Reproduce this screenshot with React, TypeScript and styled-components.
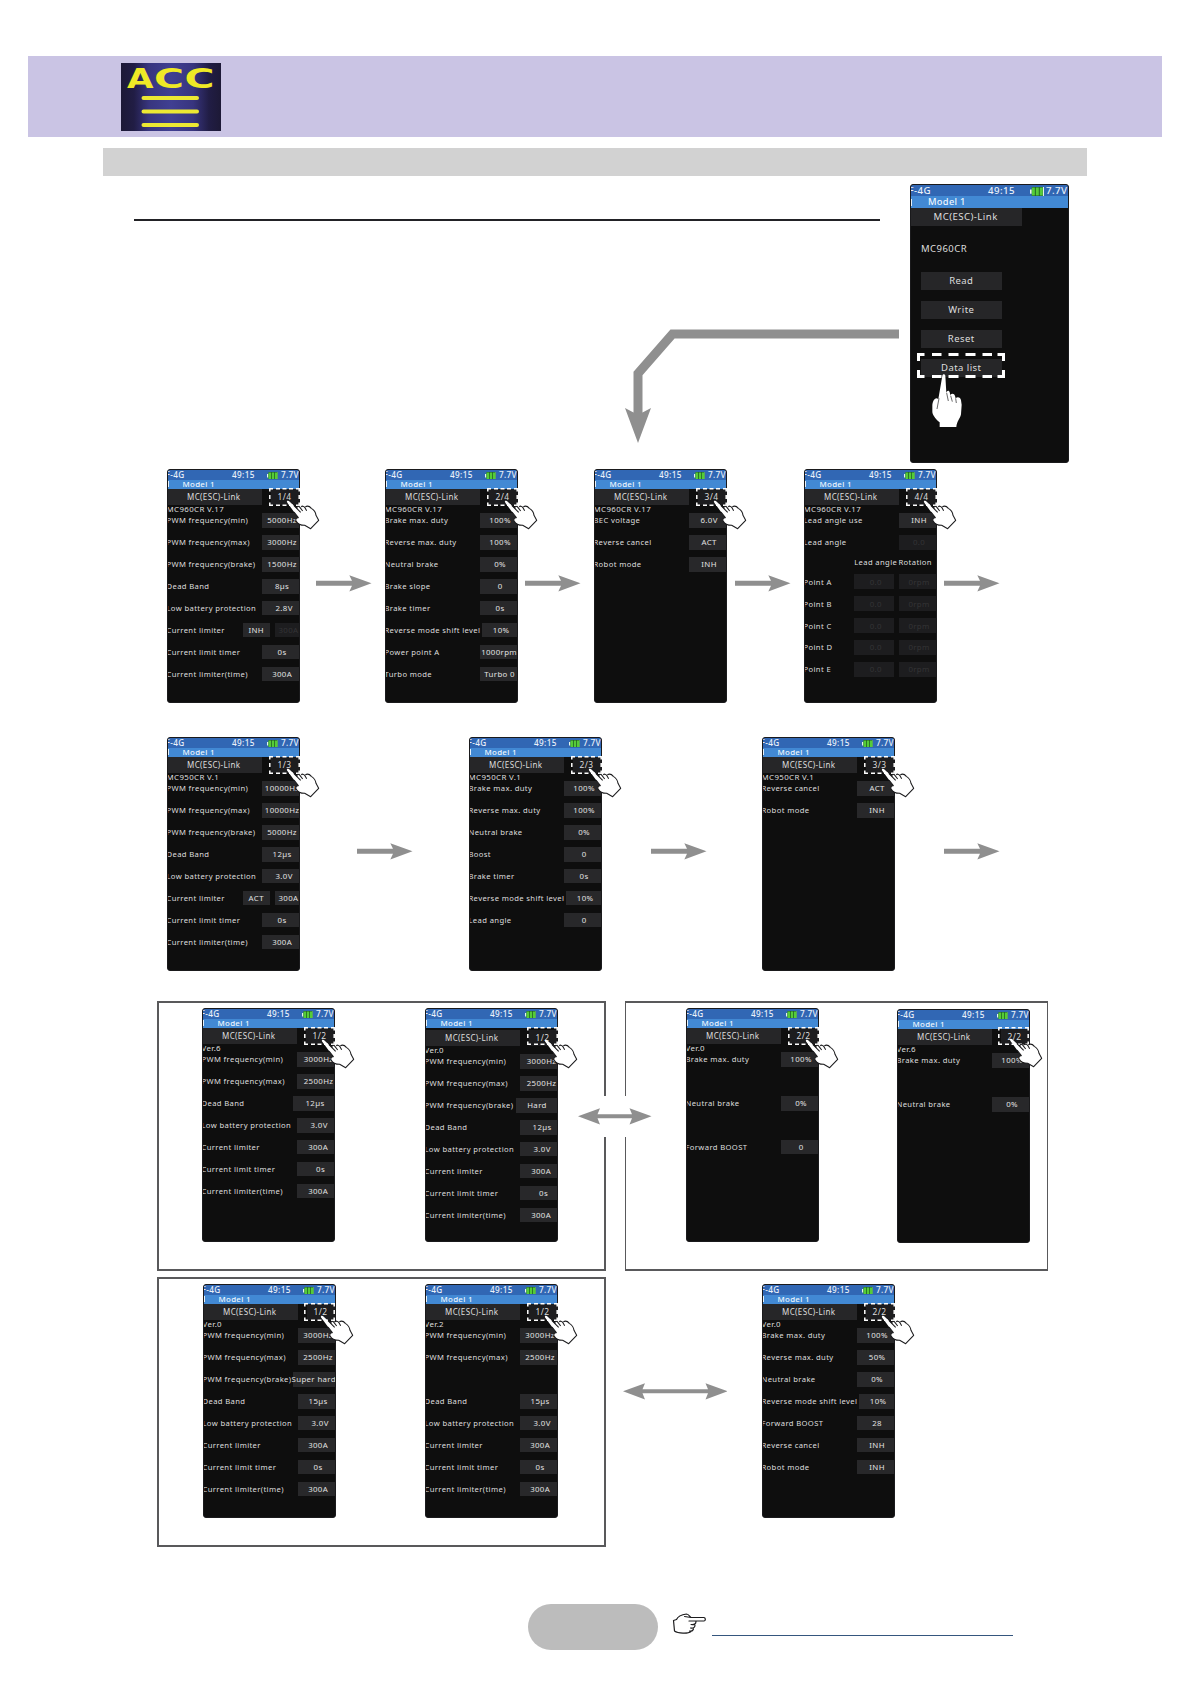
import { createGlobalStyle, styled } from "styled-components";

const GlobalStyle = createGlobalStyle`
    * {
        box-sizing: border-box;
    }
    body {
        margin: 0;
        background-color: white;
        font-family: "Noto Sans", "Open Sans", sans-serif;
    }
    svg {
        display: block;
        flex-shrink: 0;
    }
`;

const Page = styled.div`
    display: flex;
    flex-direction: column;
    width: 1190px;
    height: 1684px;
    padding-top: 56px;
    overflow: hidden;
    background-color: white;
`;

const Banner = styled.header`
    display: flex;
    align-items: flex-start;
    width: 1134px;
    height: 81px;
    margin-left: 28px;
    padding: 7px 0 0 93px;
    background-color: #cac4e4;
`;

const SubBar = styled.div`
    width: 984px;
    height: 28px;
    margin: 11px 0 0 103px;
    background-color: #d2d2d2;
`;

const Intro = styled.section`
    display: flex;
    height: 293px;
    padding-left: 134px;
`;

const IntroText = styled.div`
    display: flex;
    flex-direction: column;
    align-items: flex-end;
    width: 765px;
    padding-top: 43px;
`;

const Rule = styled.div`
    align-self: flex-start;
    width: 746px;
    height: 2px;
    margin-bottom: 108px;
    background-color: #222226;
`;

const FlowRow = styled.section<{ $top?: number; $height?: number }>`
    position: relative;
    display: flex;
    align-items: flex-start;
    height: ${(p) => p.$height ?? 234}px;
    margin-top: ${(p) => p.$top ?? 0}px;
`;

const Group = styled.div<{ $gap: number; $width: number; $side?: number }>`
    display: flex;
    align-items: flex-start;
    flex-shrink: 0;
    width: ${(p) => p.$width}px;
    height: 100%;
    margin-left: ${(p) => p.$gap}px;
    border: 2px solid #59595b;
    border-left-width: ${(p) => p.$side ?? 2}px;
    border-right-width: ${(p) => p.$side ?? 2}px;
`;

const ArrowSlot = styled.div<{ $gap: number; $top?: number }>`
    flex-shrink: 0;
    margin-left: ${(p) => p.$gap}px;
    margin-top: ${(p) => p.$top ?? 106}px;
`;

// sits over the two group frames and opens a gap in them
const Bridge = styled.div`
    position: absolute;
    left: 578px;
    top: 95px;
    display: flex;
    align-items: center;
    height: 41px;
    background-color: white;
`;

const Device = styled.div<{ $gap: number; $top?: number }>`
    position: relative;
    flex-shrink: 0;
    width: 133px;
    height: 234px;
    margin-left: ${(p) => p.$gap}px;
    margin-top: ${(p) => p.$top ?? 0}px;
`;

const Screen = styled.div`
    width: 100%;
    height: 100%;
    overflow: hidden;
    border: 1px solid #1a1a1c;
    border-radius: 3px;
    background-color: #0e0e0e;
    color: #dedede;
    font-size: 7.65px;
    letter-spacing: 0.37px;
    line-height: 10px;
    white-space: nowrap;
`;

const StatusBar = styled.div`
    display: flex;
    align-items: center;
    height: 9.5px;
    padding-top: 1px;
    background-color: #3167b4;
    color: #eaf1f9;
    font-size: 8.2px;
    font-weight: 500;
`;

const Signal = styled.span`
    width: 67.5px;
    margin-left: -2.5px;
`;

const Clock = styled.span`
    width: 35.5px;
`;

const Voltage = styled.span`
    margin-left: 2.5px;
`;

const ModelBar = styled.div`
    display: flex;
    align-items: center;
    height: 9.5px;
    background-color: #4289d4;
    color: #eef6fd;
    font-size: 7.9px;
    font-weight: 500;
    letter-spacing: 0.3px;

    &::before {
        content: "";
        width: 1px;
        height: 6px;
        margin-right: 13.5px;
        background-color: #e6f1fb;
    }
`;

const TabRow = styled.div<{ $drop?: number }>`
    display: flex;
    justify-content: space-between;
    height: 16px;
    margin-top: ${(p) => p.$drop ?? 0}px;
`;

const Tab = styled.div`
    display: flex;
    align-items: center;
    width: 94px;
    padding-left: 19px;
    background-color: #262628;
    font-size: 8px;
`;

const PageNo = styled.div`
    display: flex;
    align-items: center;
    justify-content: center;
    width: 28px;
    padding-right: 1px;
    background-color: #1d1d1f;
    font-size: 8.4px;
`;

const Version = styled.div`
    height: 9px;
    margin-left: -1.5px;
    font-size: 7.9px;
    line-height: 8px;
`;

// the first row is pulled up under the version text
const Lines = styled.div`
    margin-top: -4.5px;
`;

const Line = styled.div<{ $height?: number }>`
    display: flex;
    align-items: center;
    height: ${(p) => p.$height ?? 21.95}px;
`;

const Label = styled.span`
    flex: 1;
    min-width: 0;
    margin-left: -1.5px;
`;

const Value = styled.span<{ $width?: number; $shift?: number; $off?: boolean }>`
    display: flex;
    flex-shrink: 0;
    align-items: center;
    justify-content: center;
    width: ${(p) => p.$width ?? 37.3}px;
    height: 14.5px;
    padding-left: ${(p) => Math.max(0, 3.5 + (p.$shift ?? 0) * 2)}px;
    background-color: ${(p) => (p.$off ? "#1d1d1f" : "#28282a")};
    color: ${(p) => (p.$off ? "#343436" : "#e2e2e2")};
    font-size: 7.85px;
`;

const Spacer = styled.span<{ $width: number }>`
    flex-shrink: 0;
    width: ${(p) => p.$width}px;
`;

const Mark = styled.div<{ $x?: number; $y?: number }>`
    position: absolute;
    left: ${(p) => 102.3 + (p.$x ?? 0)}px;
    top: ${(p) => 19 + (p.$y ?? 0)}px;
`;

const Pointer = styled.div<{ $x?: number; $y?: number }>`
    position: absolute;
    left: ${(p) => 118.7 + (p.$x ?? 0)}px;
    top: ${(p) => 30.5 + (p.$y ?? 0)}px;
`;

const MenuDevice = styled.div`
    position: relative;
    flex-shrink: 0;
    width: 158.5px;
    height: 279px;
    margin: 8px 0 0 11px;
`;

const MenuScreen = styled(Screen)`
    font-size: 9.5px;
    letter-spacing: 0.45px;

    ${StatusBar} {
        height: 11.3px;
        font-size: 9.7px;
    }
    ${ModelBar} {
        height: 11.5px;
        font-size: 9.3px;
    }
    ${ModelBar}::before {
        height: 7px;
        margin-right: 16px;
    }
    ${Signal} {
        width: 79.5px;
    }
    ${Clock} {
        width: 41.5px;
    }
    ${Tab} {
        width: 110.5px;
        padding-left: 22.5px;
        font-size: 9.6px;
    }
    ${TabRow} {
        height: 18px;
    }
`;

const MenuTitle = styled.div`
    margin: 17px 0 18.5px 10px;
    line-height: 11px;
`;

const MenuButtons = styled.div`
    display: flex;
    flex-direction: column;
    gap: 11.5px;
    padding-left: 10px;
`;

const MenuButton = styled.div`
    display: flex;
    align-items: center;
    justify-content: center;
    width: 80.5px;
    height: 17.5px;
    background-color: #262628;
`;

const MenuMark = styled.div`
    position: absolute;
    left: 7px;
    top: 169px;
`;

const MenuPointer = styled.div`
    position: absolute;
    left: 21px;
    top: 189px;
`;

const Footer = styled.footer`
    display: flex;
    height: 46px;
    margin: 57px 0 0 527.5px;
`;

const Pill = styled.div`
    width: 130px;
    height: 46px;
    border-radius: 23px;
    background-color: #bcbcbc;
`;

const FooterHand = styled.div`
    margin: 8.5px 0 0 14px;
`;

const FooterLink = styled.div`
    width: 301px;
    height: 32px;
    margin-left: 6.5px;
    border-bottom: 1px solid #35567e;
`;

type Item = {
    label?: string;
    value?: string;
    width?: number;
    shift?: number;
    off?: boolean;
    toggle?: string;
};

type Info = {
    page: string;
    version: string;
    items: Item[];
    drop?: number;
    markX?: number;
    markY?: number;
    handX?: number;
    handY?: number;
};

const min = (value: string): Item => ({ label: "PWM frequency(min)", value });
const max = (value: string): Item => ({ label: "PWM frequency(max)", value });
const limits = (shift = 0): Item[] => [
    { label: "Current limit timer", value: "0s", shift },
    { label: "Current limiter(time)", value: "300A" },
];
const low = (value: string): Item => ({ label: "Low battery protection", value, shift: 2 });

const mc960: Info[] = [
    {
        page: "1/4",
        version: "MC960CR V.17",
        items: [
            min("5000Hz"),
            max("3000Hz"),
            { label: "PWM frequency(brake)", value: "1500Hz" },
            { label: "Dead Band", value: "8µs" },
            low("2.8V"),
            { label: "Current limiter", value: "300A", toggle: "INH", off: true },
            ...limits(),
        ],
    },
    {
        page: "2/4",
        version: "MC960CR V.17",
        items: [
            { label: "Brake max. duty", value: "100%" },
            { label: "Reverse max. duty", value: "100%" },
            { label: "Neutral brake", value: "0%" },
            { label: "Brake slope", value: "0" },
            { label: "Brake timer", value: "0s" },
            { label: "Reverse mode shift level", value: "10%", width: 35.3 },
            { label: "Power point A", value: "1000rpm", shift: -1 },
            { label: "Turbo mode", value: "Turbo 0", shift: -0.5 },
        ],
    },
    {
        page: "3/4",
        version: "MC960CR V.17",
        items: [
            { label: "BEC voltage", value: "6.0V" },
            { label: "Reverse cancel", value: "ACT" },
            { label: "Robot mode", value: "INH" },
        ],
    },
    {
        page: "4/4",
        version: "MC960CR V.17",
        items: [
            { label: "Lead angle use", value: "INH" },
            { label: "Lead angle", value: "0.0", off: true },
        ],
    },
];

const mc950: Info[] = [
    {
        page: "1/3",
        version: "MC950CR V.1",
        items: [
            min("10000Hz"),
            max("10000Hz"),
            { label: "PWM frequency(brake)", value: "5000Hz" },
            { label: "Dead Band", value: "12µs" },
            low("3.0V"),
            { label: "Current limiter", value: "300A", toggle: "ACT" },
            ...limits(),
        ],
    },
    {
        page: "2/3",
        version: "MC950CR V.1",
        items: [
            { label: "Brake max. duty", value: "100%" },
            { label: "Reverse max. duty", value: "100%" },
            { label: "Neutral brake", value: "0%" },
            { label: "Boost", value: "0" },
            { label: "Brake timer", value: "0s" },
            { label: "Reverse mode shift level", value: "10%", width: 35.3 },
            { label: "Lead angle", value: "0" },
        ],
    },
    {
        page: "3/3",
        version: "MC950CR V.1",
        items: [
            { label: "Reverse cancel", value: "ACT" },
            { label: "Robot mode", value: "INH" },
        ],
    },
];

const first: Info[] = [
    {
        page: "1/2",
        version: "Ver.6",
        items: [
            { ...min("3000Hz"), shift: 1.5 },
            { ...max("2500Hz"), shift: 1.5 },
            { label: "Dead Band", value: "12µs", width: 41.5 },
            low("3.0V"),
            { label: "Current limiter", value: "300A", shift: 1 },
            { label: "Current limit timer", value: "0s", shift: 3.5 },
            { label: "Current limiter(time)", value: "300A", shift: 1 },
        ],
    },
    {
        page: "1/2",
        version: "Ver.0",
        drop: 2,
        items: [
            { ...min("3000Hz"), shift: 1.5 },
            { ...max("2500Hz"), shift: 1.5 },
            { label: "PWM frequency(brake)", value: "Hard", width: 41.5, shift: -1 },
            { label: "Dead Band", value: "12µs", shift: 2 },
            low("3.0V"),
            { label: "Current limiter", value: "300A", shift: 1 },
            { label: "Current limit timer", value: "0s", shift: 3.5 },
            { label: "Current limiter(time)", value: "300A", shift: 1 },
        ],
    },
    {
        page: "2/2",
        version: "Ver.0",
        items: [
            { label: "Brake max. duty", value: "100%" },
            {},
            { label: "Neutral brake", value: "0%" },
            {},
            { label: "Forward BOOST", value: "0" },
        ],
    },
    {
        page: "2/2",
        version: "Ver.6",
        markX: -1.5,
        markY: -1,
        handX: -7,
        handY: -1.5,
        items: [{ label: "Brake max. duty", value: "100%" }, {}, { label: "Neutral brake", value: "0%" }],
    },
];

const second: Info[] = [
    {
        page: "1/2",
        version: "Ver.0",
        markX: -1.5,
        handX: -1.5,
        items: [
            min("3000Hz"),
            max("2500Hz"),
            { label: "PWM frequency(brake)", value: "Super hard", width: 42.5, shift: -2 },
            { label: "Dead Band", value: "15µs" },
            low("3.0V"),
            { label: "Current limiter", value: "300A" },
            ...limits(),
        ],
    },
    {
        page: "1/2",
        version: "Ver.2",
        items: [
            min("3000Hz"),
            max("2500Hz"),
            {},
            { label: "Dead Band", value: "15µs" },
            low("3.0V"),
            { label: "Current limiter", value: "300A" },
            ...limits(),
        ],
    },
    {
        page: "2/2",
        version: "Ver.0",
        items: [
            { label: "Brake max. duty", value: "100%" },
            { label: "Reverse max. duty", value: "50%" },
            { label: "Neutral brake", value: "0%" },
            { label: "Reverse mode shift level", value: "10%", width: 35.3 },
            { label: "Forward BOOST", value: "28" },
            { label: "Reverse cancel", value: "INH" },
            { label: "Robot mode", value: "INH" },
        ],
    },
];

function Battery({ width = 11.5 }: { width?: number }) {
    return (
        <svg width={width} height={width * 0.65} viewBox="0 0 23 15">
            <path d="M0 4h3v7H0zM21 0h2v15h-2z" fill="#e8f5e8" />
            <path d="M3 0h18v15H3z" fill="#1f5a24" />
            <path d="M3 1h5v13H3zM9.500 1h5v13h-5zM16 1h5v13h-5z" fill="#55cc38" />
        </svg>
    );
}

function StatusHead({ big }: { big?: boolean }) {
    return (
        <>
            <StatusBar>
                <Signal>F-4G</Signal>
                <Clock>49:15</Clock>
                <Battery width={big ? 14 : 11.5} />
                <Voltage>7.7V</Voltage>
            </StatusBar>
            <ModelBar>Model 1</ModelBar>
        </>
    );
}

function HandPointer() {
    return (
        <svg width="35" height="31" viewBox="0 0 105 93">
            <path
                d="M3 3C6 1 9 3 12 6L34 27C31 20 34 17 40 19L46 21C48 17 53 17 58 20C62 17 69 19 74 23C82 28 88 34 90 44L98 61L74 86L56 76C44 76 34 70 30 62C28 56 33 52 37 53L5 10C3 7 2 5 3 3Z"
                fill="white"
            />
            <path
                d="M24 17L44 37M34 27C31 20 34 17 40 20L50 33M46 21C48 17 53 18 56 22L62 32M58 20C64 17 72 20 76 25C86 31 89 38 90 46L98 61L74 86L56 76C44 76 34 70 30 62C28 56 33 52 37 53L24 36"
                fill="none"
                stroke="#1c1c1e"
                strokeWidth="3.2"
                strokeLinejoin="round"
            />
        </svg>
    );
}

function Arrow() {
    return (
        <svg width="56" height="17" viewBox="0 0 56 17">
            <path d="M0 5.7H36L33.3 0.3L55.5 8.2L33.3 16.6L36 10.7H0Z" fill="#8f8f8f" />
        </svg>
    );
}

function DoubleArrow({ width }: { width: number }) {
    const end = width - 22;
    return (
        <svg width={width} height="17" viewBox={`0 0 ${width} 17`}>
            <path
                d={`M0 8.2L22 0.2L19.5 6.2H${end + 2.5}L${end} 0.2L${width} 8.2L${end} 16.4L${end + 2.5} 10.2H19.5L22 16.4Z`}
                fill="#8f8f8f"
            />
        </svg>
    );
}

function PointTable() {
    return (
        <>
            <Line $height={17.3}>
                <Spacer $width={49.2} />
                <Spacer $width={44.3}>Lead angle</Spacer>
                <span>Rotation</span>
            </Line>
            {["A", "B", "C", "D", "E"].map((name) => (
                <Line key={name}>
                    <Label>Point {name}</Label>
                    <Value $off $width={39.7}>0.0</Value>
                    <Spacer $width={4.8} />
                    <Value $off>0rpm</Value>
                </Line>
            ))}
        </>
    );
}

function Phone({ info, gap, top, table }: { info: Info; gap: number; top?: number; table?: boolean }) {
    return (
        <Device $gap={gap} $top={top}>
            <Screen>
                <StatusHead />
                <TabRow $drop={info.drop}>
                    <Tab>MC(ESC)-Link</Tab>
                    <PageNo>{info.page}</PageNo>
                </TabRow>
                <Version>{info.version}</Version>
                <Lines>
                    {info.items.map((item, i) => (
                        <Line key={i}>
                            <Label>{item.label}</Label>
                            {item.toggle && (
                                <>
                                    <Value $width={27} $shift={-1.5}>{item.toggle}</Value>
                                    <Spacer $width={5} />
                                </>
                            )}
                            {item.value && (
                                <Value $width={item.toggle ? 24.5 : item.width} $shift={item.shift} $off={item.off}>
                                    {item.value}
                                </Value>
                            )}
                        </Line>
                    ))}
                    {table && <PointTable />}
                </Lines>
            </Screen>
            <Mark $x={info.markX} $y={info.markY}>
                <svg width="31" height="18" viewBox="0 0 31 18">
                    <path
                        d="M0.8 3.5V0.8H4M7 0.8H11M13.5 0.8H17.500M20 0.8H24M27 0.8H30.2V3.5M30.2 7V11M30.2 14.500V17.2H27M24 17.2H20M17.500 17.2H13.500M11 17.2H7M4 17.2H0.8V14.500M0.8 11V7"
                        fill="none"
                        stroke="white"
                        strokeWidth="1.5"
                    />
                </svg>
            </Mark>
            <Pointer $x={info.handX} $y={info.handY}>
                <HandPointer />
            </Pointer>
        </Device>
    );
}

function MenuPhone() {
    return (
        <MenuDevice>
            <MenuScreen>
                <StatusHead big />
                <TabRow>
                    <Tab>MC(ESC)-Link</Tab>
                </TabRow>
                <MenuTitle>MC960CR</MenuTitle>
                <MenuButtons>
                    <MenuButton>Read</MenuButton>
                    <MenuButton>Write</MenuButton>
                    <MenuButton>Reset</MenuButton>
                    <MenuButton>Data list</MenuButton>
                </MenuButtons>
            </MenuScreen>
            <MenuMark>
                <svg width="88" height="25" viewBox="0 0 88 25">
                    <path
                        d="M1.5 8V1.5H7.5M15 1.5H24.5M31.5 1.5H41.5M48.5 1.5H58.5M65.5 1.5H75M80.5 1.5H86.5V8M86.5 17V23.5H80.5M75 23.5H65.5M58.5 23.5H48.5M41.5 23.5H31.5M24.5 23.5H15M7.5 23.5H1.5V17"
                        fill="none"
                        stroke="white"
                        strokeWidth="3"
                    />
                </svg>
            </MenuMark>
            <MenuPointer>
                <svg width="32" height="56" viewBox="0 0 96 168">
                    <path
                        d="M34 8C35 2 42 2 43 8L46 60C48 50 55 52 56 58L58 66C62 60 70 61 72 69L74 76C80 70 89 74 90 82L92 95L90 124C88 136 77 146 76 162H26V148C12 136 4 124 4 116V96C5 86 10 76 17 76L22 78Z"
                        fill="white"
                    />
                    <path d="M18 108L24 76M47 60L52 84M59 68L64 86M74 76L76 90" stroke="#1c1c1e" strokeWidth="2" fill="none" />
                </svg>
            </MenuPointer>
        </MenuDevice>
    );
}

const LogoLetter = styled.text`
    font-family: "DejaVu Sans", sans-serif;
    font-size: 27px;
    font-weight: bold;
    fill: #efe926;
`;

function AccLogo() {
    return (
        <svg width="100" height="68" viewBox="0 0 100 68">
            <defs>
                <linearGradient id="accGlow">
                    <stop offset="0" stopColor="#1d1936" />
                    <stop offset="0.13" stopColor="#211d45" />
                    <stop offset="0.28" stopColor="#38357f" />
                    <stop offset="0.5" stopColor="#403f92" />
                    <stop offset="0.72" stopColor="#38357f" />
                    <stop offset="0.88" stopColor="#211d45" />
                    <stop offset="1" stopColor="#1d1936" />
                </linearGradient>
            </defs>
            <rect width="100" height="68" fill="url(#accGlow)" />
            <LogoLetter x="6" y="24.7" textLength="26.5" lengthAdjust="spacingAndGlyphs">A</LogoLetter>
            <LogoLetter x="33" y="24.7" textLength="30" lengthAdjust="spacingAndGlyphs">C</LogoLetter>
            <LogoLetter x="63.5" y="24.7" textLength="30" lengthAdjust="spacingAndGlyphs">C</LogoLetter>
            <path d="M22.5 35H76M22.5 48.5H76M22.5 62H76" stroke="#ece833" strokeWidth="4" strokeLinecap="round" />
        </svg>
    );
}

export default function App() {
    return (
        <>
            <GlobalStyle />
            <Page>
                <Banner>
                    <AccLogo />
                </Banner>
                <SubBar />
                <Intro>
                    <IntroText>
                        <Rule />
                        <svg width="275" height="115" viewBox="0 0 275 115">
                            <path d="M275 5H48.5L14 44.5V86" fill="none" stroke="#8f8f8f" strokeWidth="9" />
                            <path d="M1 79L9.5 83.5H18.5L27 79L14 114Z" fill="#8f8f8f" />
                        </svg>
                    </IntroText>
                    <MenuPhone />
                </Intro>

                <FlowRow>
                    <Phone info={mc960[0]} gap={167} />
                    <ArrowSlot $gap={16}><Arrow /></ArrowSlot>
                    <Phone info={mc960[1]} gap={13} />
                    <ArrowSlot $gap={7}><Arrow /></ArrowSlot>
                    <Phone info={mc960[2]} gap={13} />
                    <ArrowSlot $gap={8}><Arrow /></ArrowSlot>
                    <Phone info={mc960[3]} gap={13} table />
                    <ArrowSlot $gap={7}><Arrow /></ArrowSlot>
                </FlowRow>

                <FlowRow $top={34}>
                    <Phone info={mc950[0]} gap={167} />
                    <ArrowSlot $gap={57}><Arrow /></ArrowSlot>
                    <Phone info={mc950[1]} gap={56} />
                    <ArrowSlot $gap={49}><Arrow /></ArrowSlot>
                    <Phone info={mc950[2]} gap={55} />
                    <ArrowSlot $gap={49}><Arrow /></ArrowSlot>
                </FlowRow>

                <FlowRow $top={30} $height={270}>
                    <Group $gap={157} $width={449}>
                        <Phone info={first[0]} gap={43} top={5} />
                        <Phone info={first[1]} gap={90} top={5} />
                    </Group>
                    <Group $gap={19} $width={423} $side={1}>
                        <Phone info={first[2]} gap={60} top={5} />
                        <Phone info={first[3]} gap={78} top={6} />
                    </Group>
                    <Bridge>
                        <DoubleArrow width={73.5} />
                    </Bridge>
                </FlowRow>

                <FlowRow $top={6} $height={270}>
                    <Group $gap={157} $width={449}>
                        <Phone info={second[0]} gap={44} top={5} />
                        <Phone info={second[1]} gap={89} top={5} />
                    </Group>
                    <ArrowSlot $gap={16.5} $top={105.5}>
                        <DoubleArrow width={104.5} />
                    </ArrowSlot>
                    <Phone info={second[2]} gap={35} top={7} />
                </FlowRow>

                <Footer>
                    <Pill />
                    <FooterHand>
                        <svg width="34" height="22" viewBox="0 0 34 22" fill="none" stroke="#1c1c1e" strokeWidth="1.2" strokeLinejoin="round" strokeLinecap="round">
                            <path d="M19 4.5H32C34 5 33.500 8 32 8H17M24 8.5C24 11 22 12 19 11.500M23 12C23 15 21 15.500 18.500 15M21.500 16C20.500 19 19 18 17.500 18M19 18.500C16 21 6 20.500 2.500 18L1.500 7.500L4.500 6.500C6 3 10 1.500 14.500 1C16.500 1 17.500 3 19 4.500L12.500 3.500" />
                        </svg>
                    </FooterHand>
                    <FooterLink />
                </Footer>
            </Page>
        </>
    );
}
